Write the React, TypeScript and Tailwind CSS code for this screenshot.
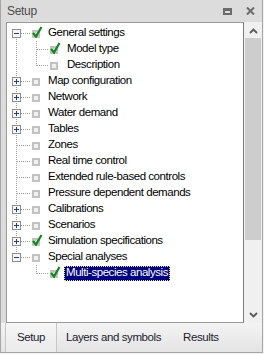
import React from "react";

type Row = {
  t: string;
  lvl: 0 | 1;
  exp?: "plus" | "minus";
  chk?: boolean;
  first?: boolean;
  last?: boolean;
  lastChild?: boolean;
  parentLast?: boolean;
  selected?: boolean;
};

const rows: Row[] = [
  { t: "General settings", lvl: 0, exp: "minus", chk: true, first: true },
  { t: "Model type", lvl: 1, chk: true },
  { t: "Description", lvl: 1, lastChild: true },
  { t: "Map configuration", lvl: 0, exp: "plus" },
  { t: "Network", lvl: 0, exp: "plus" },
  { t: "Water demand", lvl: 0, exp: "plus" },
  { t: "Tables", lvl: 0, exp: "plus" },
  { t: "Zones", lvl: 0 },
  { t: "Real time control", lvl: 0 },
  { t: "Extended rule-based controls", lvl: 0 },
  { t: "Pressure dependent demands", lvl: 0 },
  { t: "Calibrations", lvl: 0, exp: "plus" },
  { t: "Scenarios", lvl: 0, exp: "plus" },
  { t: "Simulation specifications", lvl: 0, exp: "plus", chk: true },
  { t: "Special analyses", lvl: 0, exp: "minus", last: true },
  { t: "Multi-species analysis", lvl: 1, chk: true, lastChild: true, parentLast: true, selected: true },
];

const DOT = "#a0a0a0";

function VLine({ x, y1, y2 }: { x: number; y1: number; y2: number }) {
  return (
    <line x1={x + 0.5} y1={y1} x2={x + 0.5} y2={y2} stroke={DOT} strokeWidth={1} strokeDasharray="1 1" shapeRendering="crispEdges" />
  );
}
function HLine({ x1, x2, y }: { x1: number; x2: number; y: number }) {
  return (
    <line x1={x1} y1={y + 0.5} x2={x2} y2={y + 0.5} stroke={DOT} strokeWidth={1} strokeDasharray="1 1" shapeRendering="crispEdges" />
  );
}

function CheckIcon({ x, checked }: { x: number; checked?: boolean }) {
  return (
    <g>
      <rect x={x} y={5} width={8} height={8} fill="#c2c2c2" shapeRendering="crispEdges" />
      <rect x={x + 2} y={7} width={4} height={4} fill={checked ? "#d6d6d6" : "#f0f0f0"} shapeRendering="crispEdges" />
      {checked && (
        <polyline
          points={`${x + 1},${8} ${x + 4},${11.5} ${x + 9.5},${2}`}
          fill="none"
          stroke="#14861a"
          strokeWidth={2.2}
          strokeLinejoin="miter"
        />
      )}
    </g>
  );
}

function Expander({ kind }: { kind: "plus" | "minus" }) {
  return (
    <g shapeRendering="crispEdges">
      <rect x={5.5} y={4.5} width={8} height={8} fill="#f6f6f8" stroke="#8f8f8f" strokeWidth={1} />
      <rect x={7} y={8} width={5} height={1} fill="#1f3d8a" />
      {kind === "plus" && <rect x={9} y={6} width={1} height={5} fill="#1f3d8a" />}
    </g>
  );
}

function Glyph({ r }: { r: Row }) {
  const w = r.lvl === 0 ? 36 : 55;
  return (
    <svg width={w} height={16} viewBox={`0 0 ${w} 16`} className="shrink-0">
      {r.lvl === 0 && (
        <>
          {r.first ? (
            <VLine x={9} y1={12} y2={16} />
          ) : r.last ? (
            <VLine x={9} y1={0} y2={r.exp ? 4 : 9} />
          ) : (
            <VLine x={9} y1={0} y2={16} />
          )}
          <HLine x1={r.exp ? 14 : 10} x2={23} y={8} />
          {r.exp && <Expander kind={r.exp} />}
          <CheckIcon x={25} checked={r.chk} />
        </>
      )}
      {r.lvl === 1 && (
        <>
          {!r.parentLast && <VLine x={9} y1={0} y2={16} />}
          <VLine x={29} y1={0} y2={r.lastChild ? 9 : 16} />
          <HLine x1={30} x2={42} y={8} />
          <CheckIcon x={43} checked={r.chk} />
        </>
      )}
    </svg>
  );
}

function TreeRow({ r }: { r: Row }) {
  return (
    <div className="flex h-[16px] items-center">
      <Glyph r={r} />
      {r.selected ? (
        <span className="ml-[2px] flex h-[15px] items-center whitespace-nowrap bg-[#000080] pl-[2px] pr-[2px] text-white outline-1 outline-dotted outline-[#e8e880] -outline-offset-1">
          {r.t}
        </span>
      ) : (
        <span className="ml-[5px] whitespace-nowrap text-black">{r.t}</span>
      )}
    </div>
  );
}

function Chevron({ up }: { up?: boolean }) {
  return (
    <svg width="9" height="6" viewBox="0 0 9 6">
      <polyline
        points={up ? "1,5 4.5,1.5 8,5" : "1,1 4.5,4.5 8,1"}
        fill="none"
        stroke="#5a5a5a"
        strokeWidth={1.8}
      />
    </svg>
  );
}

export default function App() {
  return (
    <div
      className="h-[354px] w-[264px] bg-[#f2f2f2] text-[11.5px] tracking-[-0.45px]"
      style={{ fontFamily: '"Liberation Sans", Arial, sans-serif' }}
    >
      <div className="flex h-[353px] w-[263px] flex-col border-x border-b border-[#a6a6a6] bg-[#dcdcdc]">
        {/* title bar */}
        <div className="flex h-[22px] shrink-0 items-center pl-[6px] pr-[7px]">
          <span className="text-[12px] text-[#4d4d4d] tracking-[-0.3px]">Setup</span>
          <div className="ml-auto flex items-center gap-[14px]">
            <svg width="9" height="7" viewBox="0 0 9 7" shapeRendering="crispEdges">
              <rect x="0" y="0" width="9" height="7" fill="#6b6b6b" />
              <rect x="2" y="3" width="5" height="2" fill="#dcdcdc" />
            </svg>
            <svg width="9" height="8" viewBox="0 0 9 8">
              <path d="M1 0.5 L8 7.5 M8 0.5 L1 7.5" stroke="#6b6b6b" strokeWidth="2" />
            </svg>
          </div>
        </div>
        {/* body */}
        <div className="flex h-[301px] shrink-0 pl-[5px]">
          <div className="flex-1 border border-r-[#7c7c7c] border-[#9a9a9a] border-r bg-white pt-[2px]">
            {rows.map((r) => (
              <TreeRow key={r.t} r={r} />
            ))}
          </div>
          <div className="flex w-[18px] flex-col bg-[#f0f0f0]">
            <div className="flex h-[16px] items-center justify-center pt-[1px]">
              <Chevron up />
            </div>
            <div className="mx-[1px] h-[202px] bg-[#cdcdcd]" />
            <div className="flex-1" />
            <div className="flex h-[17px] items-center justify-center">
              <Chevron />
            </div>
          </div>
        </div>
        {/* tabs */}
        <div className="flex flex-1 items-stretch bg-gradient-to-b from-[#f3f3f3] to-[#e4e4e4] pl-[4px] text-[#1c1c30] tracking-[-0.4px]">
          <div className="flex w-[52px] items-center justify-center border-x border-[#c6c6c6] bg-gradient-to-b from-[#f6f6f6] to-[#ebebeb]">
            Setup
          </div>
          <div className="flex items-center pl-[9px]">Layers and symbols</div>
          <div className="flex items-center pl-[22px]">Results</div>
        </div>
      </div>
    </div>
  );
}
